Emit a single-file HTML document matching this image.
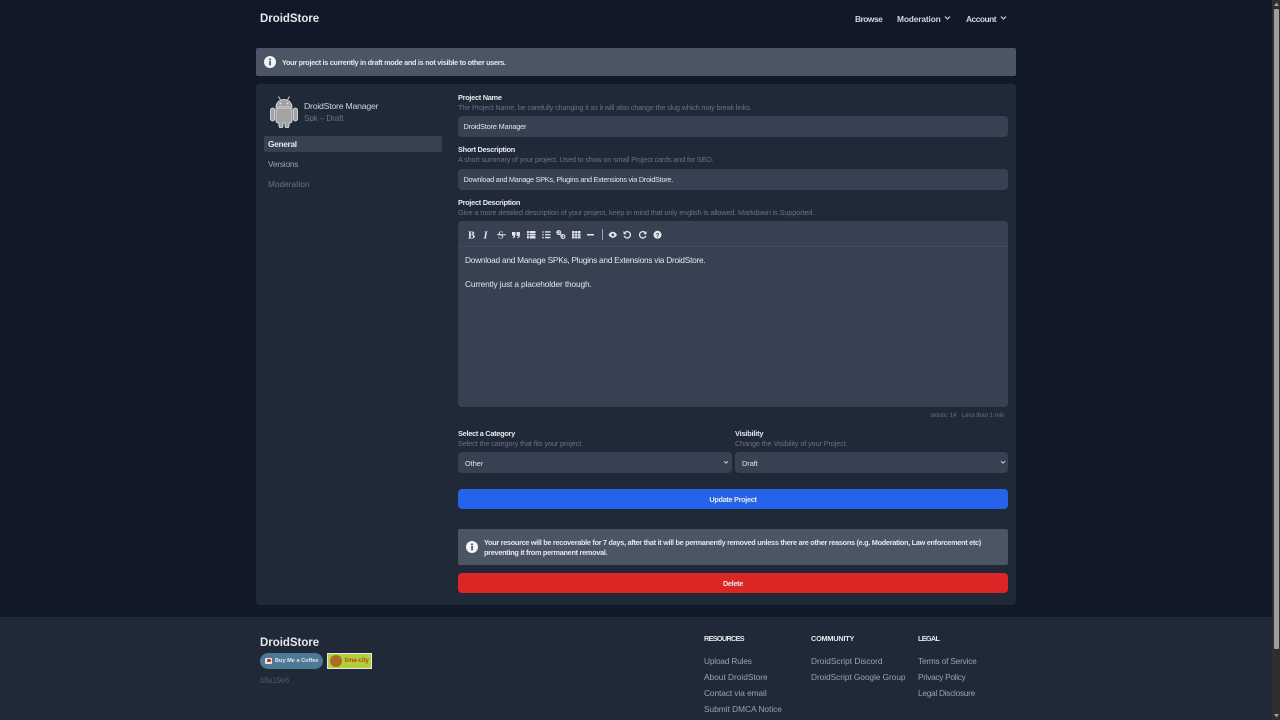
<!DOCTYPE html>
<html>
<head>
<meta charset="utf-8">
<style>
*{box-sizing:border-box}
html,body{margin:0;padding:0;width:1280px;height:720px;overflow:hidden;background:#111827;font-family:"Liberation Sans",sans-serif;color:#e5e7eb}
div,svg{position:absolute}
.t{white-space:nowrap;line-height:1.2}
.lab{font-size:7.4px;font-weight:bold;color:#e5e7eb;letter-spacing:-.3px}
.sub{font-size:7.3px;color:#6b7280;letter-spacing:-.15px}
.inp{background:#374151;border-radius:4px}
.foot{font-size:8.3px;color:#9ca3af}
.fh{font-size:7.3px;font-weight:bold;color:#e5e7eb}
</style>
</head>
<body>
<!-- nav -->
<div class="t" style="left:260px;top:12.500px;font-size:11.500px;font-weight:bold;color:#e5e7eb;letter-spacing:-.03px">DroidStore</div>
<div class="t" style="left:855px;top:13.500px;font-size:8.400px;font-weight:bold;color:#d1d5db;letter-spacing:-.5px">Browse</div>
<div class="t" style="left:897px;top:13.500px;font-size:8.400px;font-weight:bold;color:#d1d5db;letter-spacing:-.15px">Moderation</div>
<svg style="left:944px;top:15px" width="7" height="6" viewBox="0 0 7 6"><path d="M1 1.500l2.500 2.500L6 1.500" fill="none" stroke="#d1d5db" stroke-width="1.200"/></svg>
<div class="t" style="left:966px;top:13.500px;font-size:8.400px;font-weight:bold;color:#d1d5db;letter-spacing:-.5px">Account</div>
<svg style="left:1000px;top:15px" width="7" height="6" viewBox="0 0 7 6"><path d="M1 1.500l2.500 2.500L6 1.500" fill="none" stroke="#d1d5db" stroke-width="1.200"/></svg>

<!-- alert -->
<div style="left:256px;top:48px;width:760px;height:28px;background:#4b5563;border-radius:2px"></div>
<svg style="left:264px;top:56px" width="12" height="12" viewBox="0 0 12 12"><circle cx="6" cy="6" r="6" fill="#f3f4f6"/><rect x="5.200" y="5" width="1.700" height="4.400" fill="#4b5563"/><circle cx="6" cy="3.400" r="1" fill="#4b5563"/></svg>
<div class="t" style="left:282px;top:58.500px;font-size:7.300px;font-weight:bold;color:#e5e7eb;letter-spacing:-.3px">Your project is currently in draft mode and is not visible to other users.</div>

<!-- card -->
<div style="left:256px;top:84px;width:760px;height:521px;background:#1f2937;border-radius:4px"></div>

<!-- android icon -->
<svg style="left:269px;top:95px" width="30" height="33" viewBox="0 0 30 33">
<g fill="#a3a3a3" stroke="#e5e7eb" stroke-width=".8">
<path d="M7 12a8 7.500 0 0 1 16 0z"/>
<path d="M7 13h16v13a2 2 0 0 1-2 2h-1v3a2 2 0 0 1-4 0v-3h-2v3a2 2 0 0 1-4 0v-3H9a2 2 0 0 1-2-2z"/>
<rect x="1.500" y="13" width="4.300" height="13" rx="2.100"/>
<rect x="24.200" y="13" width="4.300" height="13" rx="2.100"/>
</g>
<path d="M9.500 1.500l2 3.500M20.500 1.500l-2 3.500" stroke="#d1d5db" stroke-width="1"/>
<circle cx="11.500" cy="8.500" r=".9" fill="#e5e7eb"/><circle cx="18.500" cy="8.500" r=".9" fill="#e5e7eb"/>
</svg>
<div class="t" style="left:304px;top:101px;font-size:8.700px;color:#d1d5db;letter-spacing:-.22px">DroidStore Manager</div>
<div class="t" style="left:304px;top:113.500px;font-size:8.300px;color:#6b7280;letter-spacing:-.2px">Spk – Draft</div>

<div style="left:264px;top:136px;width:178px;height:16px;background:#374151;border-radius:2px"></div>
<div class="t" style="left:268px;top:139.500px;font-size:8.300px;font-weight:bold;color:#e5e7eb;letter-spacing:-.3px">General</div>
<div class="t" style="left:268px;top:159.500px;font-size:8.300px;color:#9ca3af;letter-spacing:-.2px">Versions</div>
<div class="t" style="left:268px;top:179.500px;font-size:8.300px;color:#6b7280">Moderation</div>

<!-- form -->
<div class="t lab" style="left:458px;top:93.500px">Project Name</div>
<div class="t sub" style="left:458px;top:103.500px;letter-spacing:-.165px">The Project Name, be carefully changing it as it will also change the slug which may break links.</div>
<div class="inp" style="left:458px;top:116px;width:550px;height:21px"></div>
<div class="t" style="left:463.500px;top:122.500px;font-size:7.300px;color:#e5e7eb;letter-spacing:-.16px">DroidStore Manager</div>

<div class="t lab" style="left:458px;top:146px">Short Description</div>
<div class="t sub" style="left:458px;top:156px;letter-spacing:-.17px">A short summary of your project. Used to show on small Project cards and for SEO.</div>
<div class="inp" style="left:458px;top:169px;width:550px;height:21px"></div>
<div class="t" style="left:463.500px;top:175.500px;font-size:7.300px;color:#e5e7eb;letter-spacing:-.25px">Download and Manage SPKs, Plugins and Extensions via DroidStore.</div>

<div class="t lab" style="left:458px;top:198.500px">Project Description</div>
<div class="t sub" style="left:458px;top:208.500px;letter-spacing:-.12px">Give a more detailed description of your project, keep in mind that only english is allowed. Markdown is Supported.</div>
<div class="inp" style="left:458px;top:221px;width:550px;height:186px"></div>
<div style="left:458px;top:246px;width:550px;height:1px;background:#3f4a5a"></div>

<!-- toolbar -->
<svg style="left:458px;top:221px" width="220" height="26" viewBox="0 0 220 26">
<g fill="#e5e7eb" stroke="none">
<text x="10" y="17.500" font-family="Liberation Serif" font-weight="bold" font-size="10.500">B</text>
<text x="25.500" y="17.500" font-family="Liberation Serif" font-style="italic" font-weight="bold" font-size="10.500">I</text>
<text x="40" y="17.500" font-family="Liberation Serif" font-size="10.500">S</text>
<rect x="39" y="13.300" width="9" height=".9"/>
<path d="M54 11h3.400v3.300c0 1.700-1 2.800-2.600 3v-1.200c.7-.2 1.100-.6 1.100-1.300H54zM58.500 11h3.400v3.300c0 1.700-1 2.800-2.600 3v-1.200c.7-.2 1.100-.6 1.100-1.300h-1.900z"/>
<path d="M69 10h8.500v7.500H69z" fill="#e5e7eb"/>
<path d="M69 12.300h8.500M69 14.800h8.500M71.200 10v7.500" stroke="#374151" stroke-width=".7"/>
<circle cx="85" cy="11" r=".8"/><circle cx="85" cy="13.800" r=".8"/><circle cx="85" cy="16.600" r=".8"/>
<path d="M87 10.300h5.500v1.300H87zM87 13.100h5.500v1.300H87zM87 15.900h5.500v1.300H87z"/>
<path d="M99.500 10.500l2 2M102.500 13.500l2.500 2.500" stroke="#e5e7eb" stroke-width="1.300"/>
<circle cx="100.800" cy="11.600" r="1.900" fill="none" stroke="#e5e7eb" stroke-width="1.100"/>
<circle cx="105" cy="15.600" r="1.900" fill="none" stroke="#e5e7eb" stroke-width="1.100"/>
<rect x="114" y="10" width="8.500" height="7.500"/>
<path d="M114 12.500h8.500M114 15h8.500M116.800 10v7.500M119.600 10v7.500" stroke="#374151" stroke-width=".6"/>
<rect x="129" y="13" width="7" height="1.500"/>
<rect x="144" y="8" width="1" height="11" fill="#9ca3af"/>
<path d="M150.500 13.800c1.200-2 2.700-3 4.300-3s3.100 1 4.200 3c-1.100 2-2.600 3-4.200 3s-3.100-1-4.300-3z"/>
<circle cx="154.800" cy="13.800" r="1.300" fill="#374151"/>
<path d="M167 11.500a3.200 3.200 0 1 1-.8 3.300" fill="none" stroke="#e5e7eb" stroke-width="1.300"/>
<path d="M165.500 10v3.200h3.200z"/>
<path d="M187 11.500a3.200 3.200 0 1 0 .8 3.300" fill="none" stroke="#e5e7eb" stroke-width="1.300"/>
<path d="M188.500 10v3.200h-3.200z"/>
<circle cx="199.500" cy="13.800" r="4"/>
</g>
<text x="199.500" y="16.300" text-anchor="middle" font-family="Liberation Sans" font-weight="bold" font-size="6.500" fill="#374151">?</text>
</svg>

<div class="t" style="left:465px;top:256px;font-size:8.300px;color:#e5e7eb;letter-spacing:-.25px">Download and Manage SPKs, Plugins and Extensions via DroidStore.</div>
<div class="t" style="left:465px;top:280px;font-size:8.300px;color:#e5e7eb;letter-spacing:-.12px">Currently just a placeholder though.</div>

<div class="t" style="left:930.500px;top:412.500px;font-size:6px;color:#6b7280">words: 14</div>
<div class="t" style="left:962px;top:412.500px;font-size:6px;color:#6b7280">Less than 1 min</div>

<div class="t lab" style="left:458px;top:430px">Select a Category</div>
<div class="t sub" style="left:458px;top:440px;letter-spacing:-.12px">Select the category that fits your project.</div>
<div class="inp" style="left:458px;top:452px;width:274px;height:21px"></div>
<div class="t" style="left:465px;top:459.500px;font-size:7.300px;color:#e5e7eb">Other</div>
<svg style="left:723px;top:460px" width="6" height="5" viewBox="0 0 6 5"><path d="M1 1.200l2 2 2-2" fill="none" stroke="#d1d5db" stroke-width="1"/></svg>

<div class="t lab" style="left:735px;top:430px;letter-spacing:-.2px">Visibility</div>
<div class="t sub" style="left:735px;top:440px;letter-spacing:-.12px">Change the Visibility of your Project.</div>
<div class="inp" style="left:735px;top:452px;width:273px;height:21px"></div>
<div class="t" style="left:742px;top:459.500px;font-size:7.300px;color:#e5e7eb">Draft</div>
<svg style="left:1000px;top:460px" width="6" height="5" viewBox="0 0 6 5"><path d="M1 1.200l2 2 2-2" fill="none" stroke="#d1d5db" stroke-width="1"/></svg>

<div style="left:458px;top:489px;width:550px;height:20px;background:#2563eb;border-radius:4px"></div>
<div class="t" style="left:458px;width:550px;top:495.500px;text-align:center;font-size:7.300px;font-weight:bold;color:#e5e7eb;letter-spacing:-.3px">Update Project</div>

<div style="left:458px;top:529px;width:550px;height:36px;background:#4b5563;border-radius:2px"></div>
<svg style="left:466px;top:541px" width="12" height="12" viewBox="0 0 12 12"><circle cx="6" cy="6" r="6" fill="#f3f4f6"/><rect x="5.200" y="5" width="1.700" height="4.400" fill="#4b5563"/><circle cx="6" cy="3.400" r="1" fill="#4b5563"/></svg>
<div class="t" style="left:484px;top:538.500px;font-size:7.300px;font-weight:bold;color:#e5e7eb;letter-spacing:-.29px">Your resource will be recoverable for 7 days, after that it will be permanently removed unless there are other reasons (e.g. Moderation, Law enforcement etc)</div>
<div class="t" style="left:484px;top:548.500px;font-size:7.300px;font-weight:bold;color:#e5e7eb;letter-spacing:-.27px">preventing it from permanent removal.</div>

<div style="left:458px;top:573px;width:550px;height:20px;background:#dc2626;border-radius:4px"></div>
<div class="t" style="left:458px;width:550px;top:579.500px;text-align:center;font-size:7.300px;font-weight:bold;color:#e5e7eb;letter-spacing:-.3px">Delete</div>

<!-- footer -->
<div style="left:0;top:617px;width:1272px;height:103px;background:#1f2937"></div>
<div class="t" style="left:260px;top:636.500px;font-size:11.500px;font-weight:bold;color:#e5e7eb;letter-spacing:-.03px">DroidStore</div>
<div style="left:260px;top:653px;width:63px;height:16px;background:#4d7a93;border-radius:8px"></div>
<div style="left:265px;top:658px;width:7px;height:6px;background:#e5e7eb;border-radius:1px"></div>
<div style="left:266.500px;top:659px;width:4px;height:3px;background:#dc2626;border-radius:1px"></div>
<div class="t" style="left:275px;top:658px;font-size:5.600px;font-weight:bold;color:#e5e7eb">Buy Me a Coffee</div>
<div style="left:327px;top:653px;width:45px;height:16px;background:#b3cf3c;border:1px solid #e5e7eb"></div>
<div style="left:330px;top:655px;width:12px;height:12px;background:#a9701f;border-radius:6px"></div>
<div class="t" style="left:344.500px;top:657.500px;font-size:6px;font-weight:bold;color:#b8450c">lima-city</div>
<div class="t" style="left:260px;top:675.500px;font-size:8px;color:#4b5563;letter-spacing:-.3px">b8a19e6</div>

<div class="t fh" style="left:704px;top:634.500px;letter-spacing:-.7px">RESOURCES</div>
<div class="t foot" style="left:704px;top:657px;letter-spacing:-.17px">Upload Rules</div>
<div class="t foot" style="left:704px;top:673px">About DroidStore</div>
<div class="t foot" style="left:704px;top:689px;letter-spacing:-.06px">Contact via email</div>
<div class="t foot" style="left:704px;top:705px">Submit DMCA Notice</div>

<div class="t fh" style="left:811px;top:634.500px;letter-spacing:-.2px">COMMUNITY</div>
<div class="t foot" style="left:811px;top:657px">DroidScript Discord</div>
<div class="t foot" style="left:811px;top:673px;letter-spacing:-.04px">DroidScript Google Group</div>

<div class="t fh" style="left:918px;top:634.500px;letter-spacing:-.7px">LEGAL</div>
<div class="t foot" style="left:918px;top:657px;letter-spacing:-.2px">Terms of Service</div>
<div class="t foot" style="left:918px;top:673px;letter-spacing:-.3px">Privacy Policy</div>
<div class="t foot" style="left:918px;top:689px;letter-spacing:-.27px">Legal Disclosure</div>

<!-- scrollbar -->
<div style="left:1272px;top:0;width:8px;height:720px;background:#2e2e2e"></div>
<div style="left:1274px;top:9px;width:5px;height:640px;background:#9e9e9e;border-radius:1px"></div>
<svg style="left:1273px;top:1px" width="7" height="6" viewBox="0 0 7 6"><path d="M3.500 1.500L6 5H1z" fill="#9e9e9e"/></svg>
<svg style="left:1273px;top:713px" width="7" height="6" viewBox="0 0 7 6"><path d="M3.500 4.500L6 1H1z" fill="#9e9e9e"/></svg>
</body>
</html>
